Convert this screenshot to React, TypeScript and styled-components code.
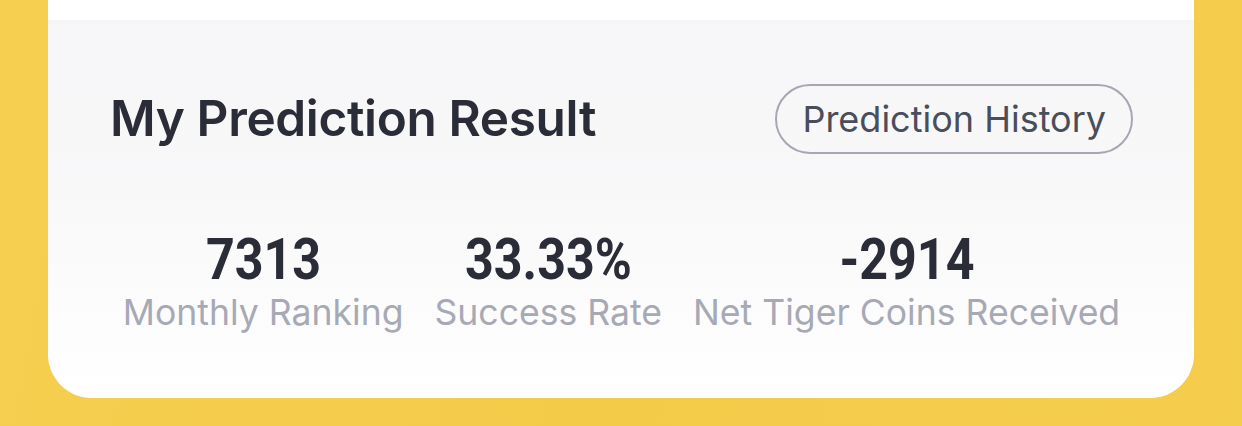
import React from "react";
import styled, { createGlobalStyle } from "styled-components";

const Global = createGlobalStyle`
  html, body {
    margin: 0;
    padding: 0;
    background: #f4cb4b;
  }
  body {
    font-family: Inter, "Noto Sans", "Liberation Sans", sans-serif;
    -webkit-font-smoothing: antialiased;
  }
`;

const Page = styled.div`
  width: 1242px;
  height: 426px;
  box-sizing: border-box;
  padding: 0 48px;
  background: linear-gradient(100deg, #f6cf50 0%, #f4ca49 50%, #f5cd4d 100%);
  overflow: hidden;
`;

const Card = styled.div`
  background: #ffffff;
  border-radius: 0 0 44px 44px;
  overflow: hidden;
`;

const TopStrip = styled.div`
  height: 20px;
  background: #ffffff;
`;

const Section = styled.div`
  background: linear-gradient(180deg, #f6f6f8 0%, #f8f8f9 45%, #ffffff 100%);
  padding: 64px 61px 0 62px;
  height: 378px;
  box-sizing: border-box;
`;

const Header = styled.div`
  display: flex;
  align-items: center;
  justify-content: space-between;
`;

const Title = styled.h2`
  margin: 0;
  font-size: 49.5px;
  font-weight: 600;
  color: #2a2c38;
  letter-spacing: -0.35px;
  line-height: 1;
`;

const HistoryButton = styled.button`
  height: 70px;
  padding: 0 25px;
  border: 2.5px solid #a6a7b3;
  border-radius: 35px;
  background: transparent;
  font-family: Inter, "Noto Sans", sans-serif;
  font-size: 36px;
  font-weight: 400;
  color: #4a4d5a;
  cursor: pointer;
`;

const Stats = styled.div`
  display: flex;
  justify-content: center;
  gap: 31px;
  margin-top: 76px;
`;

const Stat = styled.div`
  display: flex;
  flex-direction: column;
  align-items: center;
`;

const Value = styled.div`
  font-family: Roboto, "Liberation Sans", sans-serif;
  font-weight: 700;
  font-size: 58px;
  line-height: 1;
  color: #2a2c38;
  transform: scaleX(0.865);
`;

const Label = styled.div`
  margin-top: 4px;
  font-size: 35.6px;
  font-weight: 400;
  color: #a7a9b5;
  line-height: 1.2;
`;

const stats = [
  { value: "7313", label: "Monthly Ranking" },
  { value: "33.33%", label: "Success Rate" },
  { value: "-2914", label: "Net Tiger Coins Received" },
];

export default function App() {
  return (
    <>
      <Global />
      <Page>
        <Card>
          <TopStrip />
          <Section>
            <Header>
              <Title>My Prediction Result</Title>
              <HistoryButton>Prediction History</HistoryButton>
            </Header>
            <Stats>
              {stats.map((s) => (
                <Stat key={s.label}>
                  <Value>{s.value}</Value>
                  <Label>{s.label}</Label>
                </Stat>
              ))}
            </Stats>
          </Section>
        </Card>
      </Page>
    </>
  );
}
